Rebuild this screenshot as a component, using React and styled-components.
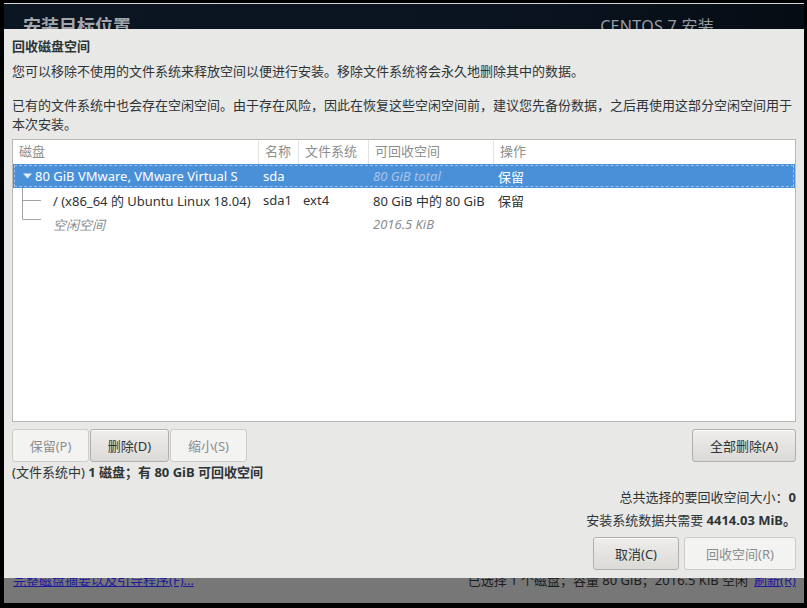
import styled, { createGlobalStyle } from 'styled-components'

const GlobalStyle = createGlobalStyle`
  html, body {
    margin: 0;
    padding: 0;
    background: #000;
  }
  * {
    box-sizing: border-box;
  }
`

const FONT = `"Noto Sans", "Noto Sans CJK SC", sans-serif`

const columns = [
  { key: 'disk', title: '磁盘', width: 245 },
  { key: 'name', title: '名称', width: 40 },
  { key: 'fs', title: '文件系统', width: 70 },
  { key: 'free', title: '可回收空间', width: 125 },
  { key: 'action', title: '操作', width: null },
]

const rows = [
  {
    id: 'sda',
    level: 0,
    selected: true,
    disk: '80 GiB VMware, VMware Virtual S',
    name: 'sda',
    fs: '',
    free: '80 GiB total',
    freeMuted: true,
    action: '保留',
  },
  {
    id: 'sda1',
    level: 1,
    guide: 'mid',
    disk: '/ (x86_64 的 Ubuntu Linux 18.04)',
    name: 'sda1',
    fs: 'ext4',
    free: '80 GiB 中的 80 GiB',
    action: '保留',
  },
  {
    id: 'free',
    level: 1,
    guide: 'last',
    muted: true,
    disk: '空闲空间',
    name: '',
    fs: '',
    free: '2016.5 KiB',
    freeMuted: true,
    action: '',
  },
]

const Screen = styled.div`
  width: 807px;
  height: 608px;
  background: #000;
  padding: 3px 3px 5px 4px;
  display: flex;
  flex-direction: column;
  font-family: ${FONT};
  font-size: 13px;
  color: #2e3436;
`

const Hub = styled.header`
  height: 26px;
  flex: none;
  border-top: 1px solid #d6d6d6;
  background: linear-gradient(90deg, #0c1623, #0a1420 60%, #060c14);
  display: flex;
  justify-content: space-between;
  padding: 12px 90px 0 19px;
  overflow: hidden;
`

const HubTitle = styled.div`
  font-size: 18px;
  line-height: 20px;
  font-weight: bold;
  color: #a4a8ad;
`

const HubProduct = styled.div`
  font-size: 16px;
  line-height: 20px;
  letter-spacing: 0.3px;
  color: #9a9ea3;
`

const Dialog = styled.section`
  height: 549px;
  flex: none;
  background: #e8e8e7;
  padding: 8px;
  display: flex;
  flex-direction: column;
`

const Title = styled.h1`
  margin: 0;
  font-size: 13px;
  line-height: 19px;
  font-weight: bold;
`

const Text = styled.p`
  margin: ${(p) => p.$top || 0}px 0 0;
  line-height: 19px;
`

const TableBox = styled.div`
  margin-top: 5px;
  height: 283px;
  flex: none;
  background: #fff;
  border: 1px solid #b9b9b6;
  display: flex;
  flex-direction: column;
`

const HeadRow = styled.div`
  display: flex;
  height: 24px;
`

const HeadCell = styled.div`
  width: ${(p) => (p.$w ? `${p.$w}px` : 'auto')};
  flex: ${(p) => (p.$w ? 'none' : '1')};
  border-left: ${(p) => (p.$first ? 'none' : '1px solid #e2e2e0')};
  padding-left: 6px;
  line-height: 22px;
  color: #8d8f8e;
  white-space: nowrap;
  overflow: hidden;
`

const Row = styled.div`
  position: relative;
  display: flex;
  height: 24px;
  background: ${(p) => (p.$selected ? '#4a90d9' : 'transparent')};
  color: ${(p) => (p.$selected ? '#fff' : '#2e3436')};
`

const FocusRing = styled.span`
  position: absolute;
  inset: 1px;
  border: 1px dashed rgba(255, 255, 255, 0.45);
  pointer-events: none;
`

const Cell = styled.div`
  width: ${(p) => (p.$w ? `${p.$w}px` : 'auto')};
  flex: ${(p) => (p.$w ? 'none' : '1')};
  padding-left: ${(p) => (p.$first ? 0 : 5)}px;
  display: flex;
  align-items: center;
  white-space: nowrap;
  overflow: hidden;
  font-style: ${(p) => (p.$muted ? 'italic' : 'normal')};
  color: ${(p) => (p.$muted ? (p.$selected ? '#a9c4e6' : '#8b8e8f') : 'inherit')};
`

const Expander = styled.span`
  width: 22px;
  flex: none;
  display: flex;
  justify-content: center;
  padding-left: 6px;
`

const Guide = styled.svg`
  width: 40px;
  height: 24px;
  flex: none;
`

const ButtonRow = styled.div`
  margin-top: 7px;
  display: flex;
  align-items: center;
`

const ButtonGroup = styled.div`
  display: flex;
  gap: 1px;
`

const Spacer = styled.div`
  flex: 1;
`

const Button = styled.button`
  height: 33px;
  width: ${(p) => p.$w}px;
  padding: 0;
  font-family: ${FONT};
  font-size: 13px;
  border-radius: 3px;
  border: 1px solid ${(p) => (p.disabled ? '#cfcbc7' : '#b1afab')};
  background: ${(p) =>
    p.disabled ? '#f3f3f2' : 'linear-gradient(#eeedeb, #dcdad7)'};
  color: ${(p) => (p.disabled ? '#8b8e8f' : '#2e3436')};
  box-shadow: ${(p) => (p.disabled ? 'none' : 'inset 0 1px #fbfbfa')};
`

const Status = styled.div`
  line-height: 19px;
  margin-top: 1px;
`

const Summary = styled.div`
  margin-top: ${(p) => p.$top}px;
  line-height: 19px;
  text-align: right;
`

const Footer = styled.div`
  margin-top: 7px;
  display: flex;
  justify-content: flex-end;
  gap: 5px;
`

const Shade = styled.footer`
  height: 25px;
  flex: none;
  background: #777777;
  overflow: hidden;
  display: flex;
  justify-content: space-between;
  padding: 0 8px 0 9px;
  color: #1c1c1c;
`

const ShadeText = styled.div`
  margin-top: -7px;
  line-height: 19px;
  display: flex;
  gap: 6px;
`

const Link = styled.span`
  color: #1d1aa0;
  text-decoration: underline;
`

function TreeGuide({ kind }) {
  const end = kind === 'last' ? 7 : 24
  const y = kind === 'last' ? 7.5 : 12.5
  return (
    <Guide viewBox="0 0 40 24">
      <line x1="9.5" y1="0" x2="9.5" y2={end} stroke="#a2a2a2" />
      <line x1="9.5" y1={y} x2="28" y2={y} stroke="#a2a2a2" />
    </Guide>
  )
}

function DiskTable() {
  return (
    <TableBox>
      <HeadRow>
        {columns.map((c, i) => (
          <HeadCell key={c.key} $w={c.width} $first={i === 0}>
            {c.title}
          </HeadCell>
        ))}
      </HeadRow>
      {rows.map((r) => (
        <Row key={r.id} $selected={r.selected}>
          {r.selected && <FocusRing />}
          <Cell $w={columns[0].width} $first $muted={r.muted} $selected={r.selected}>
            {r.level === 0 ? (
              <Expander>
                <svg width="9" height="6" viewBox="0 0 9 6">
                  <path d="M0 0.5h9L4.5 5.5z" fill="#e6effa" />
                </svg>
              </Expander>
            ) : (
              <TreeGuide kind={r.guide} />
            )}
            {r.disk}
          </Cell>
          <Cell $w={columns[1].width}>{r.name}</Cell>
          <Cell $w={columns[2].width}>{r.fs}</Cell>
          <Cell $w={columns[3].width} $muted={r.freeMuted} $selected={r.selected}>
            {r.free}
          </Cell>
          <Cell>{r.action}</Cell>
        </Row>
      ))}
    </TableBox>
  )
}

export default function App() {
  return (
    <>
      <GlobalStyle />
      <Screen>
        <Hub>
          <HubTitle>安装目标位置</HubTitle>
          <HubProduct>CENTOS 7 安装</HubProduct>
        </Hub>
        <Dialog>
          <Title>回收磁盘空间</Title>
          <Text $top={6}>
            您可以移除不使用的文件系统来释放空间以便进行安装。移除文件系统将会永久地删除其中的数据。
          </Text>
          <Text $top={15}>
            已有的文件系统中也会存在空闲空间。由于存在风险，因此在恢复这些空闲空间前，建议您先备份数据，之后再使用这部分空闲空间用于本次安装。
          </Text>
          <DiskTable />
          <ButtonRow>
            <ButtonGroup>
              <Button disabled $w={77}>保留(P)</Button>
              <Button $w={79}>删除(D)</Button>
              <Button disabled $w={77}>缩小(S)</Button>
            </ButtonGroup>
            <Spacer />
            <Button $w={104}>全部删除(A)</Button>
          </ButtonRow>
          <Status>
            (文件系统中) <b>1 磁盘；有 80 GiB 可回收空间</b>
          </Status>
          <Summary $top={6}>
            总共选择的要回收空间大小：<b>0</b>
          </Summary>
          <Summary $top={4}>
            安装系统数据共需要 <b>4414.03 MiB。</b>
          </Summary>
          <Footer>
            <Button $w={86}>取消(C)</Button>
            <Button disabled $w={112}>回收空间(R)</Button>
          </Footer>
        </Dialog>
        <Shade>
          <ShadeText>
            <Link>完整磁盘摘要以及引导程序(F)...</Link>
          </ShadeText>
          <ShadeText>
            <span>已选择 1 个磁盘；容量 80 GiB；2016.5 KiB 空闲</span>
            <Link>刷新(R)</Link>
          </ShadeText>
        </Shade>
      </Screen>
    </>
  )
}
